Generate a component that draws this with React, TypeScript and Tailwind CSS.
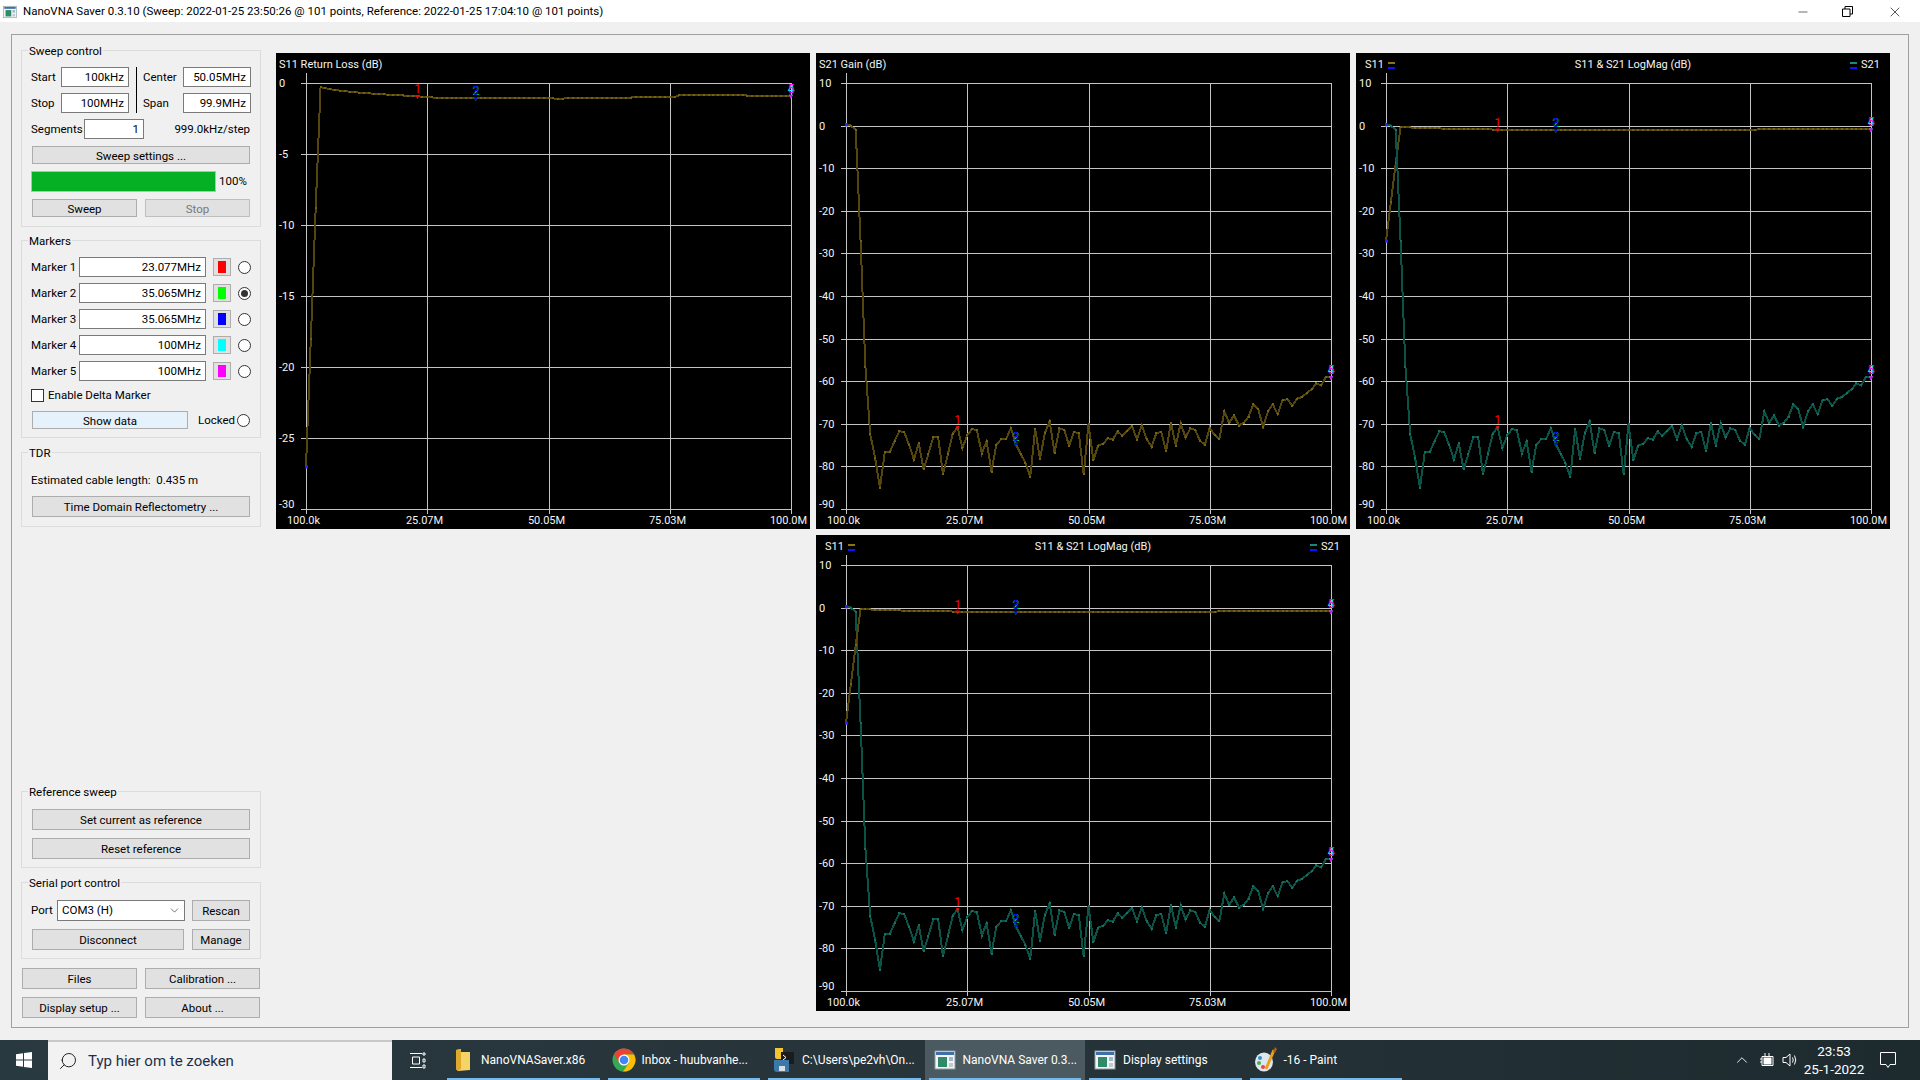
import { ChevronDown, ChevronUp, Minus, Search, X } from 'lucide-react';

// measured traces, index 0..100 over the 101 sweep points
const S21 = [
  0.3, 0, -1, -27, -56.6, -72.5, -78, -85, -76.7, -76.7, -74.1, -71.7, -72, -74.9, -78.4, -74.6, -80.7, -77, -73.1,
  -73.1, -81.9, -77.2, -72.3, -70.8, -75.7, -72.7, -71.2, -71.5, -77, -74.1, -81.2, -74.9, -73.6, -73.6, -71, -74.7,
  -77, -79.2, -82.4, -71.2, -78.2, -72.2, -69.4, -76.8, -71.1, -71.4, -75.1, -71.9, -72.2, -81.9, -70.1, -78.5, -75.1,
  -74.7, -73.4, -73.7, -71.8, -72.8, -71.6, -70.6, -73.7, -70.3, -73.6, -75.4, -72.2, -71.9, -76.4, -69.7, -75.1,
  -69.9, -73.2, -71.1, -71.4, -74, -74.9, -70.9, -72.7, -73.5, -67.1, -69.8, -68, -70.4, -69.8, -68.3, -65.4, -66.5,
  -70.8, -67.1, -65.4, -67.8, -64.5, -64.2, -65.8, -64.1, -63.7, -62.8, -61.9, -60.5, -61, -58.9, -59.1,
];

const S11_KNOTS: [number, number][] = [
  [0, -27], [1, -18], [2, -8.8], [3, -0.3], [6, -0.5], [10, -0.65], [15, -0.78], [20, -0.88], [25, -0.98], [27, -1.05],
  [50, -1.05], [52, -1.12], [55, -1.05], [76, -1], [77, -0.85], [100, -0.9],
];

const S11 = Array.from({ length: 101 }, (_, i) => {
  const k = S11_KNOTS.findIndex(([x]) => x >= i);
  if (k <= 0) return S11_KNOTS[0][1];
  const [x0, y0] = S11_KNOTS[k - 1];
  const [x1, y1] = S11_KNOTS[k];
  return y0 + ((y1 - y0) * (i - x0)) / (x1 - x0);
});

const OLIVE = { data: S11, line: '#54460c', dot: '#75630f' };
const TEAL = { data: S21, line: '#0b5247', dot: '#137062' };
const OLIVE_S21 = { ...OLIVE, data: S21 };

const MARKERS = [
  { n: 1, i: 23, color: '#ff0000' },
  { n: 2, i: 35, color: '#00ff00' },
  { n: 3, i: 35, color: '#0000ff' },
  { n: 4, i: 100, color: '#00ffff' },
  { n: 5, i: 100, color: '#ff00ff' },
];

const X_LABELS = ['100.0k', '25.07M', '50.05M', '75.03M', '100.0M'];
const PX0 = 30;
const PX1 = 515;
const PY0 = 30;
const PY1 = 456;

function Chart({
  title,
  traces,
  top = 10,
  bottom = -90,
  step = 10,
  legend = false,
}: {
  title: string;
  traces: { data: number[]; line: string; dot: string }[];
  top?: number;
  bottom?: number;
  step?: number;
  legend?: boolean;
}) {
  const px = (i: number) => PX0 + (i * (PX1 - PX0)) / 100;
  const py = (db: number) => PY0 + ((top - db) * (PY1 - PY0)) / (top - bottom);
  const ticks: number[] = [];
  for (let v = top; v >= bottom; v -= step) ticks.push(v);

  return (
    <div className="h-[476px] w-[534px] bg-black">
      <svg width="534" height="476" className="block text-[11px]">
        {ticks.map((v) => (
          <g key={v}>
            <line x1={PX0 - 5} x2={PX1} y1={Math.round(py(v)) + 0.5} y2={Math.round(py(v)) + 0.5} stroke="#c4c4c4" />
            {/* the lowest label sits a little above its line */}
            <text x="3" y={py(v) + (v === bottom ? -1 : 4)} fill="#f4f4f4">
              {v}
            </text>
          </g>
        ))}
        {X_LABELS.map((label, k) => {
          const x = Math.round(PX0 + (k * (PX1 - PX0)) / 4) + 0.5;
          return (
            <g key={label}>
              <line x1={x} x2={x} y1={k === 0 ? PY0 - 10 : PY0} y2={PY1 + 5} stroke="#c4c4c4" />
              <text x={x - 3} y="471" textAnchor="middle" fill="#f4f4f4">
                {label}
              </text>
            </g>
          );
        })}
        {traces.map((t) => (
          <g key={t.line}>
            <polyline
              points={t.data.map((d, i) => `${px(i)},${py(d)}`).join(' ')}
              fill="none"
              stroke={t.line}
              strokeWidth="2"
              shapeRendering="crispEdges"
            />
            {t.data.map((d, i) => (
              <rect key={i} x={Math.round(px(i)) - 1} y={Math.round(py(d)) - 1} width="2" height="2" fill={t.dot} />
            ))}
            <rect x={PX0 - 1} y={py(t.data[0]) - 1} width="3" height="3" fill="#2020ff" />
          </g>
        ))}
        {traces.map((t) =>
          MARKERS.map((m) => {
            const x = px(m.i);
            const y = py(t.data[m.i]);
            return (
              <g key={`${t.line}-${m.n}`}>
                <polygon points={`${x - 2},${y - 1} ${x + 2},${y - 1} ${x},${y + 3}`} fill={m.color} />
                <text x={x} y={y - 3} textAnchor="middle" fontSize="12" fill={m.color}>
                  {m.n}
                </text>
              </g>
            );
          }),
        )}
        {legend ? (
          <>
            <text x="9" y="15" fill="#f4f4f4">S11</text>
            <rect x="32" y="9" width="7" height="2" fill="#8a7312" />
            <rect x="32" y="14" width="7" height="2" fill="#1010ff" />
            <text x="277" y="15" textAnchor="middle" fill="#f4f4f4">{title}</text>
            <rect x="494" y="9" width="7" height="2" fill="#168a78" />
            <rect x="494" y="14" width="7" height="2" fill="#1010ff" />
            <text x="505" y="15" fill="#f4f4f4">S21</text>
          </>
        ) : (
          <text x="3" y="15" fill="#f4f4f4">{title}</text>
        )}
      </svg>
    </div>
  );
}

function Group({ title, className, children }: { title: string; className?: string; children: React.ReactNode }) {
  return (
    <div className={`relative w-[240px] border border-[#dcdcdc] px-[9px] ${className ?? ''}`}>
      <span className="absolute -top-[8px] left-[6px] whitespace-nowrap bg-[#f0f0f0] px-px leading-4">{title}</span>
      {children}
    </div>
  );
}

function Btn({ className, children }: { className: string; children: React.ReactNode }) {
  return (
    <button
      type="button"
      className={`flex items-center justify-center overflow-hidden whitespace-nowrap border border-[#adadad] bg-[#e1e1e1] leading-4 ${className}`}
    >
      {children}
    </button>
  );
}

function Field({ className, children }: { className: string; children: React.ReactNode }) {
  return (
    <div className={`flex h-[20px] items-center justify-end border border-[#7a7a7a] bg-white pr-[4px] pt-px ${className}`}>
      {children}
    </div>
  );
}

function Radio({ checked = false, className = '' }: { checked?: boolean; className?: string }) {
  return (
    <div className={`flex h-[13px] w-[13px] items-center justify-center rounded-full border border-[#333] bg-white ${className}`}>
      {checked && <div className="h-[7px] w-[7px] rounded-full bg-[#333]" />}
    </div>
  );
}

function MarkerRow({ label, value, color, checked }: { label: string; value: string; color: string; checked?: boolean }) {
  return (
    <div className="flex h-[20px] items-center">
      <span className="w-[48px] whitespace-nowrap pt-px">{label}</span>
      <Field className="w-[127px]">{value}</Field>
      <div className="ml-[7px] flex h-[18px] w-[18px] items-center justify-center border border-[#adadad] bg-[#e1e1e1]">
        <div className={`h-[12px] w-[8px] ${color}`} />
      </div>
      <Radio checked={checked} className="ml-[7px]" />
    </div>
  );
}

function LeftPanel() {
  return (
    <div className="ml-[9px] flex w-[240px] shrink-0 flex-col">
      <Group title="Sweep control" className="pb-[9px] pt-[16px]">
        <div className="flex">
          <div className="flex flex-col gap-[6px]">
            <div className="flex items-center">
              <span className="w-[30px] pt-px">Start</span>
              <Field className="w-[68px]">100kHz</Field>
            </div>
            <div className="flex items-center">
              <span className="w-[30px] pt-px">Stop</span>
              <Field className="w-[68px]">100MHz</Field>
            </div>
          </div>
          <div className="ml-[7px] w-px bg-black" />
          <div className="ml-[6px] flex flex-col gap-[6px]">
            <div className="flex items-center">
              <span className="w-[40px] pt-px">Center</span>
              <Field className="w-[68px]">50.05MHz</Field>
            </div>
            <div className="flex items-center">
              <span className="w-[40px] pt-px">Span</span>
              <Field className="w-[68px]">99.9MHz</Field>
            </div>
          </div>
        </div>
        <div className="mt-[6px] flex items-center">
          <span className="w-[53px] pt-px">Segments</span>
          <Field className="w-[60px]">1</Field>
          <span className="flex-1 pr-px pt-px text-right">999.0kHz/step</span>
        </div>
        <Btn className="ml-px mt-[7px] h-[18px] w-[218px] pt-px">Sweep settings ...</Btn>
        <div className="mt-[7px] flex items-center">
          <div className="h-[21px] w-[185px] border border-[#bcbcbc] bg-[#06b025]" />
          <span className="ml-[3px]">100%</span>
        </div>
        <div className="ml-px mt-[7px] flex gap-[8px]">
          <Btn className="h-[18px] w-[105px] pt-px">Sweep</Btn>
          <Btn className="h-[18px] w-[105px] border-[#bfbfbf] bg-[#cccccc] pt-px text-[#787878]">Stop</Btn>
        </div>
      </Group>

      <Group title="Markers" className="mt-[13px] pb-[8px] pt-[16px]">
        <div className="flex flex-col gap-[6px]">
          <MarkerRow label="Marker 1" value="23.077MHz" color="bg-[#ff0000]" />
          <MarkerRow label="Marker 2" value="35.065MHz" color="bg-[#00ff00]" checked />
          <MarkerRow label="Marker 3" value="35.065MHz" color="bg-[#0000ff]" />
          <MarkerRow label="Marker 4" value="100MHz" color="bg-[#00ffff]" />
          <MarkerRow label="Marker 5" value="100MHz" color="bg-[#ff00ff]" />
        </div>
        <div className="mt-[8px] flex h-[13px] items-center">
          <div className="h-[13px] w-[13px] border border-[#333] bg-white" />
          <span className="ml-[4px]">Enable Delta Marker</span>
        </div>
        <div className="mt-[9px] flex items-center">
          <Btn className="ml-px h-[18px] w-[156px] border-[#0078d7] bg-[#e5f1fb] pt-px">Show data</Btn>
          <span className="ml-[10px] pt-px">Locked</span>
          <Radio className="ml-auto mr-px" />
        </div>
      </Group>

      <Group title="TDR" className="mt-[14px] pb-[9px] pt-[19px]">
        <div className="h-[16px] leading-4">Estimated cable length:&nbsp; 0.435 m</div>
        <Btn className="ml-px mt-[8px] h-[21px] w-[218px]">Time Domain Reflectometry ...</Btn>
      </Group>

      <div className="flex-1" />

      <Group title="Reference sweep" className="pb-[8px] pt-[17px]">
        <Btn className="ml-px h-[21px] w-[218px]">Set current as reference</Btn>
        <Btn className="ml-px mt-[8px] h-[21px] w-[218px]">Reset reference</Btn>
      </Group>

      <Group title="Serial port control" className="mt-[14px] pb-[8px] pt-[17px]">
        <div className="flex items-center">
          <span className="w-[26px]">Port</span>
          <div className="flex h-[21px] w-[128px] items-center justify-between border border-[#7a7a7a] bg-white pl-[4px] pr-[3px]">
            COM3 (H)
            <ChevronDown size={13} strokeWidth={1} />
          </div>
          <Btn className="ml-[7px] h-[21px] w-[58px]">Rescan</Btn>
        </div>
        <div className="ml-px mt-[8px] flex">
          <Btn className="h-[21px] w-[152px]">Disconnect</Btn>
          <Btn className="ml-[8px] h-[21px] w-[58px]">Manage</Btn>
        </div>
      </Group>

      <div className="ml-px mt-[9px] grid grid-cols-[115px_115px] gap-[8px]">
        <Btn className="h-[21px]">Files</Btn>
        <Btn className="h-[21px]">Calibration ...</Btn>
        <Btn className="h-[21px]">Display setup ...</Btn>
        <Btn className="h-[21px]">About ...</Btn>
      </div>
    </div>
  );
}

function AppWindowIcon({ size = 22 }: { size?: number }) {
  return (
    <svg width={size} height={size} viewBox="0 0 22 22">
      <rect x="1" y="2" width="20" height="18" fill="#f4f4f4" stroke="#8a9aa5" />
      <rect x="2" y="3" width="18" height="3" fill="#3f6ea8" />
      <rect x="4" y="8" width="9" height="10" fill="#2f8a6a" />
      <rect x="15" y="8" width="4" height="4" fill="#9ab8d0" />
      <rect x="15" y="14" width="4" height="4" fill="#c0c8d0" />
    </svg>
  );
}

function FolderIcon() {
  return (
    <svg width="16" height="24" viewBox="0 0 16 24">
      <path d="M1 2 L6 1 L6 4 L15 4 L15 22 L3 23 L1 21 Z" fill="#f6d365" />
      <path d="M1 2 L6 1 L6 21 L3 23 L1 21 Z" fill="#e0a92e" />
    </svg>
  );
}

function ChromeIcon() {
  return (
    <svg width="24" height="24" viewBox="0 0 24 24">
      <circle cx="12" cy="12" r="11.5" fill="#34a853" />
      <path d="M12 .5 A11.5 11.5 0 0 1 22 6.5 L12 6.5 L7 15 L2.2 6 A11.5 11.5 0 0 1 12 .5 Z" fill="#ea4335" />
      <path d="M22 6.5 A11.5 11.5 0 0 1 11 23.5 L17 15 L12 6.5 Z" fill="#fbbc05" />
      <circle cx="12" cy="12" r="5.5" fill="#fff" />
      <circle cx="12" cy="12" r="4.3" fill="#4285f4" />
    </svg>
  );
}

function PythonConsoleIcon() {
  return (
    <svg width="22" height="26" viewBox="0 0 22 26">
      <path d="M2 1 H10 V12 H4 Q2 12 2 10 Z" fill="#f2c531" />
      <rect x="8" y="5" width="13" height="12" fill="#1b1b1b" />
      <path d="M10 8 L13 10.5 L10 13" fill="none" stroke="#fff" />
      <path d="M1 13 H16 V25 H4 Q1 25 1 22 Z" fill="#3b79ab" />
      <rect x="6" y="19" width="6" height="5" fill="#d8dee4" />
    </svg>
  );
}

function PaintIcon() {
  return (
    <svg width="24" height="26" viewBox="0 0 24 26">
      <ellipse cx="10" cy="15" rx="9" ry="9.5" fill="#dfe6ee" />
      <circle cx="6" cy="11" r="2" fill="#2f8fd0" />
      <circle cx="5" cy="16" r="2" fill="#4ab04a" />
      <circle cx="9" cy="20" r="2" fill="#e04a4a" />
      <path d="M12 22 L20 3" stroke="#e8a020" strokeWidth="3" />
      <path d="M19 5 L21 0 L23 2 L21 6 Z" fill="#b05a20" />
    </svg>
  );
}

function TaskItem({ label, icon, active }: { label: string; icon: React.ReactNode; active?: boolean }) {
  return (
    <div className={`relative flex h-full w-[160.5px] shrink-0 items-center ${active ? 'bg-[#4b5a60]' : ''}`}>
      <div className="flex w-[38px] items-center justify-center pl-[2px]">{icon}</div>
      <span className="text-[12px] text-white">{label}</span>
      <div className="absolute bottom-0 left-[4px] right-[4px] h-[2px] bg-[#76b9ed]" />
    </div>
  );
}

function Taskbar() {
  return (
    <div className="flex h-[40px] items-center bg-gradient-to-r from-[#28393f] via-[#27343a] to-[#1d2a2e]">
      <div className="flex h-full w-[48px] items-center justify-center">
        <svg width="16" height="16" viewBox="0 0 16 16" fill="#fff">
          <path d="M0 2.2 L7 1.2 V7.5 H0 Z M8 1 L16 0 V7.5 H8 Z M0 8.5 H7 V14.8 L0 13.8 Z M8 8.5 H16 V16 L8 15 Z" />
        </svg>
      </div>
      <div className="flex h-full w-[344px] items-center border-t-2 border-[#c8c8c8] bg-[#f2f2f2]">
        <Search size={20} strokeWidth={1.2} className="ml-[10px] -scale-x-100 text-[#222]" />
        <span className="ml-[10px] text-[15px] text-[#1c3048]">Typ hier om te zoeken</span>
      </div>
      <div className="flex w-[51px] justify-center">
        <svg width="17" height="17" viewBox="0 0 17 17" fill="none" stroke="#fff">
          <path d="M1 1.5 H13 M1 15.5 H13 M3.5 5 H10.5 V12 H3.5 Z M14 1 H16 V3 H14 Z M14 7 H16 V10 H14 Z M14 13 H16 V16 H14 Z" />
        </svg>
      </div>
      <TaskItem label="NanoVNASaver.x86" icon={<FolderIcon />} />
      <TaskItem label="Inbox - huubvanhe..." icon={<ChromeIcon />} />
      <TaskItem label="C:\Users\pe2vh\On..." icon={<PythonConsoleIcon />} />
      <TaskItem label="NanoVNA Saver 0.3..." icon={<AppWindowIcon />} active />
      <TaskItem label="Display settings" icon={<AppWindowIcon />} />
      <TaskItem label="-16 - Paint" icon={<PaintIcon />} />
      <div className="ml-auto flex items-center text-white">
        <ChevronUp size={18} strokeWidth={1.2} />
        <svg width="16" height="16" viewBox="0 0 16 16" fill="none" stroke="#fff" className="ml-[8px]">
          <path d="M3 4.5 H14 V13.5 H3 Z M1 7 H3 M1 10 H3 M6 1 V4 M10 1 V4" />
          <rect x="5" y="6" width="7" height="6" fill="#fff" />
        </svg>
        <svg width="16" height="16" viewBox="0 0 16 16" fill="none" stroke="#fff" className="ml-[7px]">
          <path d="M1 5.5 H4 L8 2 V14 L4 10.5 H1 Z M10.5 5.5 Q12 8 10.5 10.5 M12.5 3.5 Q15 8 12.5 12.5" />
        </svg>
        <div className="ml-[5px] flex w-[62px] flex-col items-center text-[13.5px] leading-[18px]">
          <span>23:53</span>
          <span>25-1-2022</span>
        </div>
        <svg width="18" height="18" viewBox="0 0 18 18" fill="none" stroke="#fff" className="ml-[14px] mr-[23px]">
          <path d="M1.5 1.5 H16.5 V13.5 H11 L9 16.5 L7 13.5 H1.5 Z" />
        </svg>
      </div>
    </div>
  );
}

export default function App() {
  return (
    <div className="flex h-[1080px] w-[1920px] flex-col overflow-hidden bg-[#f0f0f0] font-['Roboto',sans-serif] text-[11.5px] text-black">
      <div className="flex h-[22px] shrink-0 items-center bg-white pt-px">
        <div className="ml-[3px] flex w-[20px]">
          <AppWindowIcon size={14} />
        </div>
        <span>NanoVNA Saver 0.3.10 (Sweep: 2022-01-25 23:50:26 @ 101 points, Reference: 2022-01-25 17:04:10 @ 101 points)</span>
        <div className="ml-auto flex items-center">
          <Minus size={14} strokeWidth={1} className="mr-[32px]" />
          <svg width="11" height="11" viewBox="0 0 11 11" fill="none" stroke="#000" className="mr-[34px]">
            <path d="M.5 3 H8 V10.5 H.5 Z M3 3 V.5 H10.5 V8 H8" />
          </svg>
          <X size={16} strokeWidth={1} className="mr-[17px]" />
        </div>
      </div>
      <div className="mx-[11px] mb-[12px] mt-[12px] flex min-h-0 w-[1898px] flex-1 border border-[#a0a0a0] pb-[9px] pt-[15px]">
        <LeftPanel />
        <div className="ml-[15px] mt-[3px] grid grid-cols-[534px_534px_534px] grid-rows-[476px_476px] gap-[6px]">
          <Chart title="S11 Return Loss (dB)" traces={[OLIVE]} top={0} bottom={-30} step={5} />
          <Chart title="S21 Gain (dB)" traces={[OLIVE_S21]} />
          <Chart title="S11 & S21 LogMag (dB)" traces={[OLIVE, TEAL]} legend />
          <div className="col-start-2">
            <Chart title="S11 & S21 LogMag (dB)" traces={[TEAL, OLIVE]} legend />
          </div>
        </div>
      </div>
      <Taskbar />
    </div>
  );
}
